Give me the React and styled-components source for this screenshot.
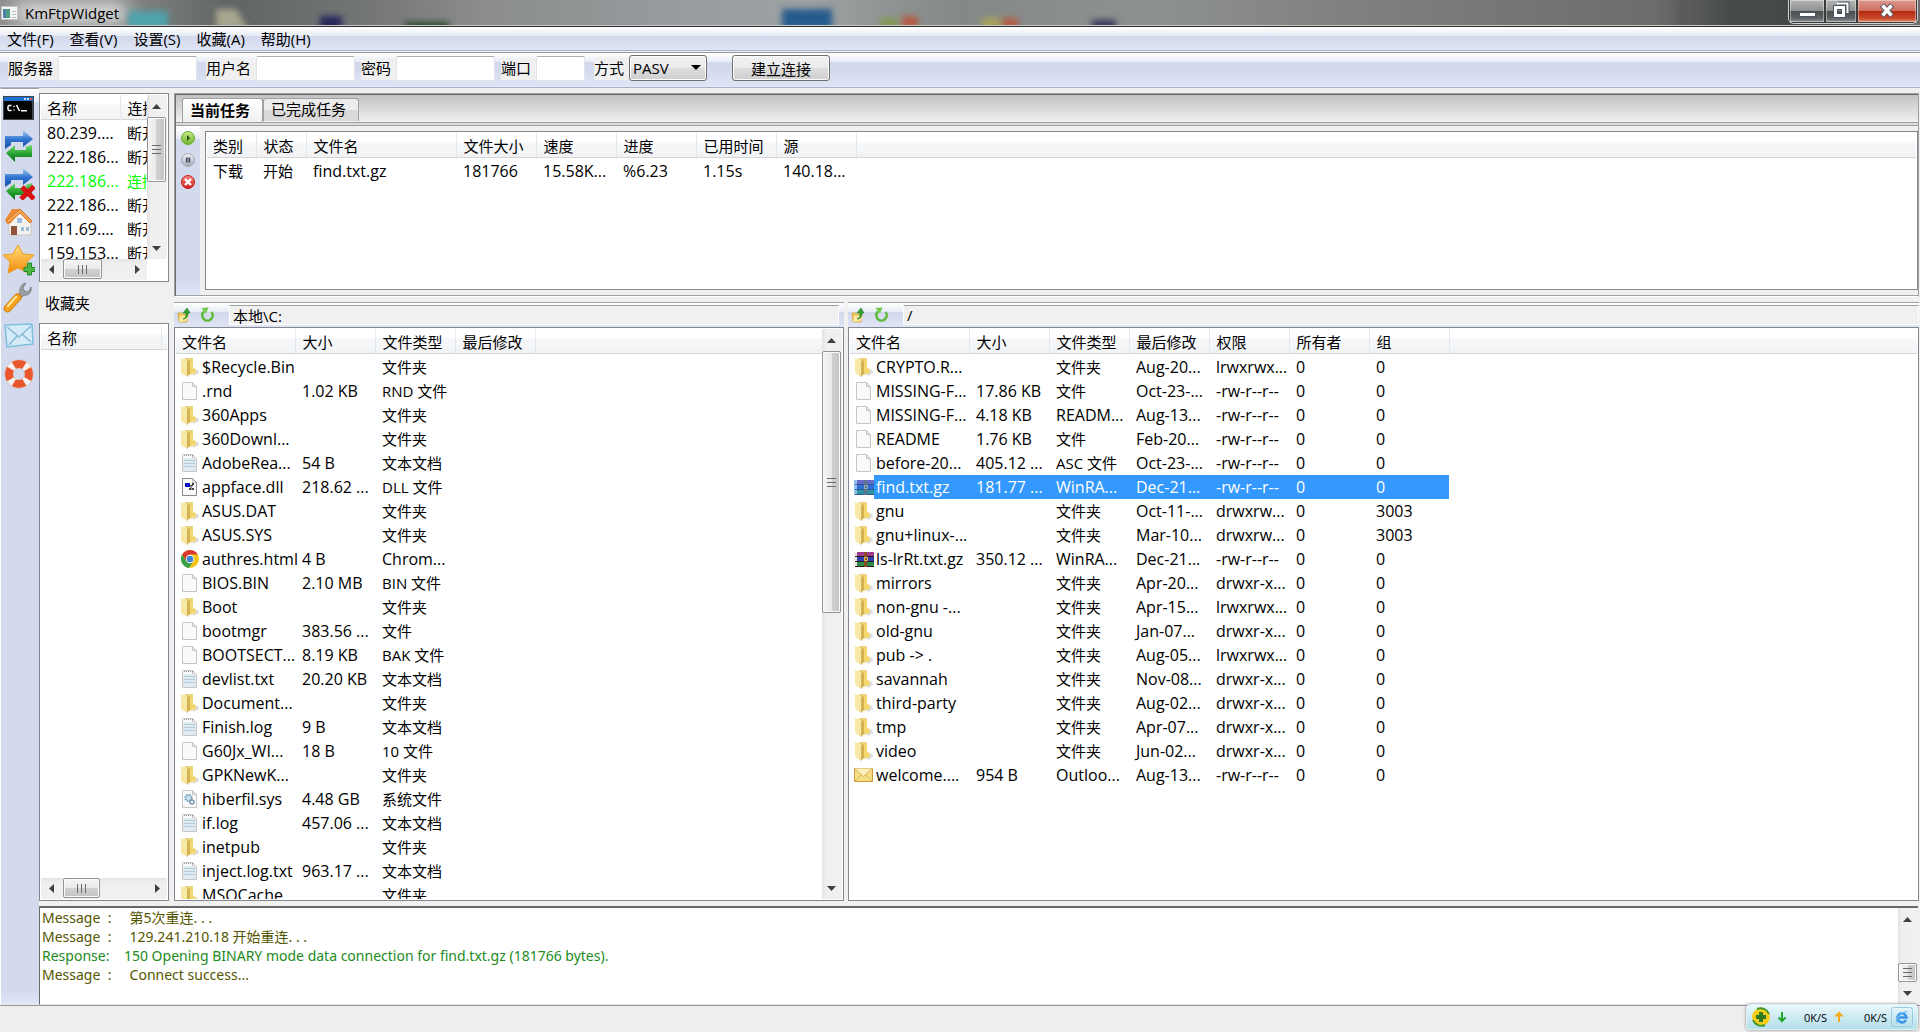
import styled, { createGlobalStyle } from "styled-components";

const GlobalStyles = createGlobalStyle`
  *, *::before, *::after {
    box-sizing: border-box;
  }
  body {
    --color-face: #f0f0f0;
    --color-frame: #828790;
    --bar: linear-gradient(#ffffff 0, #e6ebf5 9px, #d3d9ed 9px, #d4daee 50%, #e0e6f5 100%);
    margin: 0;
    background: var(--color-face);
    color: #000;
    font-family: "Open Sans", "Noto Sans CJK SC", sans-serif;
    font-size: 15px;
  }
  button, input, select {
    font: inherit;
    color: inherit;
  }
`;

const Window = styled.div`
  display: flex;
  flex-direction: column;
  height: 100vh;
  overflow: hidden;
`;

/* ---------- title bar ---------- */

const TitleBar = styled.header`
  position: relative;
  display: flex;
  align-items: center;
  flex: none;
  height: 27px;
  padding-left: 1px;
  background: #7d7f7e;
  border-bottom: 1px solid #2c2c2c;
  box-shadow: inset 0 -1px #c9c9c9;
  overflow: hidden;
`;

const Backdrop = styled.svg`
  position: absolute;
  inset: 0 0 1px;
  width: 100%;
  height: 25px;
`;

const Title = styled.h1`
  position: relative;
  flex: 1;
  margin: 0 0 0 7px;
  font-size: 15px;
  font-weight: 400;
  line-height: 26px;
`;

const AppIcon = styled.svg`
  position: relative;
`;

const WindowButtons = styled.div`
  position: relative;
  display: flex;
  align-self: flex-start;
  height: 24px;
  margin-right: 2px;
  border: 1px solid #d0d0d0;
  border-top: 0;
  border-radius: 0 0 6px 6px;
  overflow: hidden;
`;

const WindowButton = styled.button`
  display: grid;
  place-items: center;
  width: ${(props) => props.$width}px;
  padding: 0 0 2px;
  border: 1px solid #3a3a3a;
  border-top: 0;
  box-shadow: inset 0 0 0 1px #ffffff66;
  background: ${(props) =>
    props.$danger
      ? "linear-gradient(#dc9a8e 0, #cf6d5d 11px, #b52a10 11px, #c8462a 18px, #dd8a6a)"
      : "linear-gradient(#b4b6b5 0, #8d908f 11px, #4b4f50 11px, #5d6264 18px, #8c9092)"};
`;

/* ---------- menu and connection bar ---------- */

const MenuBar = styled.nav`
  display: flex;
  flex: none;
  height: 24px;
  margin-bottom: 1px;
  padding-left: 7px;
  gap: 16px;
  background: var(--bar);
  border-bottom: 1px solid #aab2cf;
`;

const MenuItem = styled.button`
  padding: 0;
  border: 0;
  background: none;
  line-height: 24px;
`;

const ConnectBar = styled.form`
  display: flex;
  flex: none;
  align-items: center;
  height: 36px;
  padding: 0 0 4px 8px;
  background: var(--bar);
  border-top: 1px solid #999;
  border-bottom: 1px solid #aab2cf;
`;

const Field = styled.div`
  display: flex;
  align-items: center;
  justify-content: space-between;
  width: ${(props) => props.$width}px;
  margin-right: ${(props) => props.$after}px;
`;

const Label = styled.label`
  flex: 1;
  height: 22px;
  margin-top: 2px;
  background: var(--color-face);
  line-height: 21px;
`;

const TextInput = styled.input`
  width: ${(props) => props.$width}px;
  height: 25px;
  padding: 0 4px;
  border: 1px solid #e2e3ea;
  border-top-color: #abadb3;
  border-radius: 2px;
  background: #fff;
`;

const SelectWrap = styled.div`
  position: relative;

  &::after {
    content: "";
    position: absolute;
    right: 6px;
    top: 10px;
    border: 5px solid transparent;
    border-top-color: #000;
    border-bottom: 0;
    pointer-events: none;
  }
`;

const Select = styled.select`
  appearance: none;
  display: block;
  width: 78px;
  height: 26px;
  padding: 0 3px;
  border: 1px solid #707070;
  border-radius: 3px;
  background: linear-gradient(#f2f2f2, #ebebeb 50%, #dddddd 50%, #cfcfcf);
  box-shadow: inset 0 0 0 1px #fff;
`;

const PushButton = styled.button`
  width: 98px;
  height: 26px;
  padding: 0;
  border: 1px solid #707070;
  border-radius: 3px;
  background: linear-gradient(#f2f2f2, #ebebeb 50%, #dddddd 50%, #cfcfcf);
  box-shadow: inset 0 0 0 1px #fcfcfc;
`;

/* ---------- body ---------- */

const Body = styled.div`
  display: flex;
  flex: 1;
  min-height: 0;
`;

const SideBar = styled.aside`
  display: flex;
  flex-direction: column;
  flex: none;
  width: 39px;
  gap: 6px;
  padding: 3px 0 0 2px;
  border-top: 1px solid #a0a0a0;
  border-left: 1px solid #fff;
  background: linear-gradient(#fff 0, #e9edf7 12px, #d4daee 14px, #d4daee calc(100% - 14px), #e2e8f6);
`;

const ToolButton = styled.button`
  display: grid;
  place-items: center;
  width: ${(props) => props.$size}px;
  height: ${(props) => props.$size}px;
  padding: 0;
  border: 0;
  background: none;
`;

const Content = styled.div`
  display: flex;
  flex-direction: column;
  flex: 1;
  min-width: 0;
`;

const Workspace = styled.div`
  display: grid;
  grid-template-columns: 130px 1fr;
  grid-template-rows: minmax(0, 1fr);
  flex: 1;
  gap: 5px;
  min-height: 0;
  padding: 5px 1px 5px 0;
`;

const Column = styled.div`
  display: flex;
  flex-direction: column;
  min-width: 0;
`;

const Frame = styled.div`
  display: grid;
  grid-template-columns: minmax(0, 1fr) auto;
  grid-template-rows: minmax(0, 1fr) auto;
  flex: ${(props) => (props.$height ? "none" : "1")};
  height: ${(props) => (props.$height ? `${props.$height}px` : "auto")};
  min-width: 0;
  min-height: 0;
  padding: 1px;
  border: 1px solid var(--color-frame);
  background: #fff;
`;

const Clip = styled.div`
  min-width: 0;
  overflow: hidden;
`;

const SectionTitle = styled.h2`
  margin: 0;
  padding: 1px 6px 0;
  font-size: 15px;
  font-weight: 400;
  line-height: 40px;
`;

const Table = styled.table`
  width: 100%;
  border-collapse: collapse;
  table-layout: fixed;
`;

const Th = styled.th`
  height: 26px;
  padding: 0 0 0 7px;
  border-right: 1px solid #e3e8ee;
  background: linear-gradient(
    #fff 0, #fff 9px, #f7f8fa 9px, #f1f2f4 24px, #d5d5d5 24px, #d5d5d5 25px, #fff 25px
  );
  font-weight: 400;
  line-height: 22px;
  text-align: left;
  white-space: nowrap;
  overflow: hidden;

  &:first-child {
    padding-left: 6px;
  }
  &:last-child {
    border-right: 0;
  }
`;

const Row = styled.tr`
  height: 24px;
  color: ${(props) => props.$color || "inherit"};
`;

const Td = styled.td`
  height: 24px;
  padding: ${(props) => (props.$latin ? 1 : 0)}px 0 0 7px;
  background: ${(props) => (props.$selected ? "#3399ff" : "none")};
  font-size: ${(props) => (props.$latin ? 16 : 15)}px;
  line-height: 23px;
  white-space: nowrap;
  overflow: hidden;

  &:first-child {
    padding-left: 6px;
  }
`;

const NameTd = styled(Td)`
  padding: 0;
  background: none;
  overflow: visible;

  &:first-child {
    padding-left: 4px;
  }
`;

const NameCell = styled.div`
  display: flex;
  align-items: center;
  height: 24px;
`;

const Name = styled.span`
  flex: 1;
  height: 24px;
  padding: 1px 0 0 2px;
  background: ${(props) => (props.$selected ? "#3399ff" : "none")};
`;

const FileSvg = styled.svg`
  flex: none;
`;

/* ---------- scroll bars ---------- */

const Track = styled.div`
  display: flex;
  flex-direction: ${(props) => (props.$vertical ? "column" : "row")};
  ${(props) =>
    props.$vertical ? "width: 20px; padding-right: 1px;" : "height: 21px; padding-bottom: 1px;"}
  background: ${(props) =>
    props.$vertical
      ? "linear-gradient(90deg, #e3e3e3, #efefef 4px, #f0f0f0)"
      : "linear-gradient(#e3e3e3, #efefef 4px, #f0f0f0)"};
`;

const ArrowButton = styled.button`
  display: grid;
  place-items: center;
  flex: none;
  width: ${(props) => (props.$vertical ? "100%" : "20px")};
  height: ${(props) => (props.$vertical ? "22px" : "100%")};
  padding: 0;
  border: 0;
  background: none;
`;

const Thumb = styled.div`
  display: grid;
  place-items: center;
  flex: none;
  ${(props) =>
    props.$vertical
      ? `height: ${props.$size}px; margin: ${props.$offset}px 0 auto;`
      : `width: ${props.$size}px; margin: 0 auto 0 ${props.$offset}px;`}
  border: 1px solid #959595;
  border-radius: 2px;
  box-shadow: inset 0 0 0 1px #fafafa;
  background: linear-gradient(
    ${(props) => (props.$vertical ? "90deg" : "180deg")},
    #f5f5f5, #e9e9eb 50%, #d2d2d4 50%, #c3c3c6
  );
`;

const arrows = {
  up: "M0 5 4.500 0 9 5z",
  down: "M0 0 9 0 4.500 5z",
  left: "M5 0 0 4.500 5 9z",
  right: "M0 0 5 4.500 0 9z",
};

function Arrow({ dir }) {
  const tall = dir === "left" || dir === "right";
  return (
    <svg width={tall ? 5 : 9} height={tall ? 9 : 5} fill="#404040">
      <path d={arrows[dir]} />
    </svg>
  );
}

function ScrollBar({ vertical, size, offset = 0 }) {
  return (
    <Track $vertical={vertical}>
      <ArrowButton $vertical={vertical} aria-label="scroll back">
        <Arrow dir={vertical ? "up" : "left"} />
      </ArrowButton>
      <Thumb $vertical={vertical} $size={size} $offset={offset}>
        <svg width="9" height="9" stroke="#6a6a6a">
          {vertical ? (
            <path d="M0 .5h9M0 4.500h9M0 8.500h9" />
          ) : (
            <path d="M.5 0v9M4.500 0v9M8.500 0v9" />
          )}
        </svg>
      </Thumb>
      <ArrowButton $vertical={vertical} aria-label="scroll forward">
        <Arrow dir={vertical ? "down" : "right"} />
      </ArrowButton>
    </Track>
  );
}

/* ---------- task panel ---------- */

const TaskPanel = styled.section`
  display: flex;
  flex-direction: column;
  flex: none;
  height: 204px;
  margin-bottom: 5px;
  border: 1px solid #a0a0a0;
  border-bottom-color: #fff;
  box-shadow: inset 1px 1px #696969, inset 0 -1px #a0a0a0;
  padding: 1px 0 1px 1px;
`;

const Tabs = styled.div`
  display: flex;
  align-items: flex-end;
  flex: none;
  height: 31px;
  padding: 0 0 3px 6px;
  border-bottom: 1px solid #a0a0a0;
  background: linear-gradient(#c2c2c2, #f0f0f0 27px, #a0a0a0 27px, #a0a0a0 28px, #dcdcdc 28px);
`;

const Tab = styled.button`
  width: ${(props) => (props.$active ? 81 : 96)}px;
  height: ${(props) => (props.$active ? 24 : 23)}px;
  margin-bottom: ${(props) => (props.$active ? 0 : 1)}px;
  padding: 0 0 2px 7px;
  border: 1px solid #a0a0a0;
  border-bottom: 0;
  border-radius: 3px 3px 0 0;
  background: ${(props) =>
    props.$active ? "linear-gradient(#fff, #f0f0f0)" : "linear-gradient(#ececec 50%, #dadada 50%)"};
  font-weight: ${(props) => (props.$active ? 700 : 400)};
  line-height: 20px;
  text-align: left;
  white-space: nowrap;
`;

const TaskBody = styled.div`
  display: flex;
  flex: 1;
  min-height: 0;
`;

const TaskTools = styled.div`
  display: flex;
  flex-direction: column;
  align-items: center;
  width: 24px;
  gap: 6px;
  padding-top: 4px;
  background: linear-gradient(#fff 0, #e9edf7 12px, #d4daee 14px, #d4daee calc(100% - 14px), #e0e6f5);
`;

const TaskList = styled.div`
  display: flex;
  flex: 1;
  min-width: 0;
  padding: 5px 0 5px 5px;
`;

/* ---------- file panes ---------- */

const Panes = styled.div`
  display: grid;
  grid-template-columns: 670px minmax(0, 1fr);
  grid-template-rows: minmax(0, 1fr);
  flex: 1;
  gap: 4px;
  min-height: 0;
`;

const PathBar = styled.div`
  display: flex;
  align-items: center;
  flex: none;
  height: 25px;
  padding: 0 ${(props) => (props.$inset ? 5 : 0)}px 0 3px;
  gap: 6px;
  border-top: 1px solid #a0a0a0;
  background: var(--bar);
`;

const PathInput = styled.input`
  flex: 1;
  min-width: 0;
  height: 20px;
  margin-left: 8px;
  padding: 0 3px;
  border: 1px solid #fff;
  border-top-color: #a0a0a0;
  background: var(--color-face);
`;

/* ---------- log and status ---------- */

const LogBox = styled.div`
  display: flex;
  flex: none;
  height: 99px;
  margin-right: 2px;
  border: 1px solid #696969;
  border-top: 2px solid #696969;
  border-right: 0;
  border-bottom-color: #e3e3e3;
  background: #fff;
`;

const LogLines = styled.div`
  flex: 1;
  padding: 0 2px;
`;

const LogLine = styled.p`
  margin: 0;
  color: ${(props) => (props.$ok ? "#228b22" : "#555500")};
  font-family: "Noto Sans", "Noto Sans CJK SC", sans-serif;
  font-size: 14px;
  line-height: 19px;
  white-space: pre;
`;

const StatusBar = styled.footer`
  position: relative;
  flex: none;
  height: 27px;
  border-top: 1px solid #999;
  background: #f0eded;
`;

const SpeedWidget = styled.div`
  position: absolute;
  right: 2px;
  bottom: 2px;
  display: flex;
  align-items: center;
  width: 172px;
  height: 26px;
  padding: 0 4px;
  border: 1px solid #d8f0f6;
  border-radius: 4px;
  background: linear-gradient(#eaf8fb, #cdeaf2 50%, #b4dfeb);
  box-shadow: 0 0 3px #777;
  font-size: 11px;
`;

const Speed = styled.span`
  width: ${(props) => props.$width}px;
  text-align: right;
`;

const IeBox = styled.span`
  display: grid;
  place-items: center;
  width: 22px;
  height: 20px;
  margin-left: auto;
  border: 1px solid #9ccbe0;
  border-radius: 3px;
`;

/* ---------- icons ---------- */

function DesktopBlur() {
  return (
    <Backdrop preserveAspectRatio="none" viewBox="0 0 1920 25" aria-hidden="true">
      <defs>
        <linearGradient id="desk">
          <stop offset="0" stopColor="#8b8e8d" />
          <stop offset=".06" stopColor="#858887" />
          <stop offset=".12" stopColor="#606463" />
          <stop offset=".2" stopColor="#767978" />
          <stop offset=".25" stopColor="#8b8d8c" />
          <stop offset=".34" stopColor="#959a9c" />
          <stop offset=".42" stopColor="#9da2a3" />
          <stop offset=".5" stopColor="#848887" />
          <stop offset=".6" stopColor="#8d918f" />
          <stop offset=".75" stopColor="#7a7a78" />
          <stop offset=".86" stopColor="#6e6d6c" />
          <stop offset=".9" stopColor="#474c4b" />
          <stop offset=".93" stopColor="#444846" />
          <stop offset="1" stopColor="#6d6e6d" />
        </linearGradient>
        <filter id="soft" x="-20%" y="-80%" width="140%" height="260%">
          <feGaussianBlur stdDeviation="3" />
        </filter>
        <filter id="glow" x="-20%" y="-100%" width="140%" height="300%">
          <feGaussianBlur stdDeviation="9" />
        </filter>
      </defs>
      <rect width="1920" height="25" fill="url(#desk)" />
      <rect x="15" y="3" width="112" height="20" fill="#e2e2e2" filter="url(#glow)" />
      <g filter="url(#soft)">
        <path fill="#50a2aa" d="M128 11h40v20h-40z" />
        <path fill="#a9a68f" d="M216 9h20l12 20h-32z" />
        <path fill="#25285c" d="M320 16h22v14h-22z" />
        <path fill="#2b4931" d="M405 22h44v10h-44z" />
        <path fill="#285c8d" d="M782 9h50v20h-50z" />
        <path fill="#839852" d="M880 18h18v14h-18z" />
        <path fill="#b45c45" d="M902 16h16v14h-16z" />
        <path fill="#a7a258" d="M982 18h18v12h-18z" />
        <path fill="#b45c45" d="M1002 18h16v12h-16z" />
        <path fill="#353758" d="M1092 20h24v10h-24z" />
        <path fill="#565958" d="M1679 0h8v25h-8z" />
      </g>
    </Backdrop>
  );
}

function CmdIcon() {
  return (
    <svg width="32" height="32" viewBox="0 0 32 32">
      <path fill="#3f4650" d="M0 4h31v24H0z" />
      <path fill="#1f6fd0" d="M1 5h29v4H1z" />
      <path fill="#cfe2fa" d="M21 6h2v2h-2zM24 6h2v2h-2z" />
      <path fill="#e0533a" d="M27 6h2v2h-2z" />
      <path fill="#050505" d="M1 9h28v18H1z" />
      <path fill="none" stroke="#fff" strokeWidth="1.500" d="M8.500 13.500H6l-1 1v3l1 1h2.500M11 14v1M11 17.500v1M13.500 13l3 6M18 18.800h6" />
    </svg>
  );
}

function SwapIcon({ failed }) {
  return (
    <svg width="32" height="32" viewBox="0 0 32 32">
      <defs>
        <linearGradient id="blueArrow" x2="0" y2="1">
          <stop stopColor="#a9cdf4" />
          <stop offset=".5" stopColor="#2f73cf" />
          <stop offset="1" stopColor="#1b50a4" />
        </linearGradient>
        <linearGradient id="greenArrow" x2="0" y2="1">
          <stop stopColor="#6bd865" />
          <stop offset=".6" stopColor="#1e9a2a" />
          <stop offset="1" stopColor="#0d6b1c" />
        </linearGradient>
      </defs>
      <path fill="url(#blueArrow)" d="M2 19V6h18V0l10 9-10 8v-5H8v3z" />
      <path fill="url(#greenArrow)" d="m3 23 9-8v5h11v-3l6-2v12H12v5z" />
      {failed && (
        <path stroke="#d81212" strokeWidth="5" d="m19 19 12 12M31 18.500 18 31" />
      )}
    </svg>
  );
}

function HomeIcon() {
  return (
    <svg width="32" height="32" viewBox="0 0 32 32">
      <path fill="#f4f1ee" stroke="#c9c4c0" d="M6 14 17 5l11 10v14H6z" />
      <path fill="#f08c34" d="m2 14 7-11h9L8 17l-4 1z" />
      <path fill="#f6a454" stroke="#d87423" d="m17 3 12 12-2 2L17 7 6 17l-3-2z" />
      <path fill="#91513a" d="M8 20h6v9H8z" />
      <path fill="#9bbfe0" d="M14 12h5v5h-5zM18 21h3v4h-3zM23 21h3v4h-3z" />
    </svg>
  );
}

function StarIcon() {
  return (
    <svg width="32" height="32" viewBox="0 0 32 32">
      <defs>
        <linearGradient id="gold" x2="0" y2="1">
          <stop stopColor="#ffe07a" />
          <stop offset="1" stopColor="#f38a0b" />
        </linearGradient>
      </defs>
      <path fill="url(#gold)" stroke="#ef9d1c" strokeLinejoin="round" d="m15 1 5 9 11 1-8 8 2 10-10-5-10 5 2-11-7-7 10-1z" />
      <path fill="#4cb84a" stroke="#278a2b" d="M24.500 19h4v4.500H32v4h-3.500V31h-4v-3.500H21v-4h3.500z" />
    </svg>
  );
}

function ToolIcon() {
  return (
    <svg width="32" height="32" viewBox="0 0 32 32">
      <path fill="#9a9ea1" stroke="#6f7376" strokeWidth=".7" d="M14 15c3-1 2-5 3-8 1-4 3-6 6-6l-3 5 2 4 4-1 2-4c1 4-1 7-4 8-3 0-5 1-7 4z" />
      <path fill="#f6a21a" stroke="#c97a0c" d="M13 12c3-1 6 2 5 5L7 29c-3 3-8-1-5-5z" />
      <path stroke="#ffe193" strokeWidth="2.500" strokeLinecap="round" d="m5 24 8-9" />
    </svg>
  );
}

function MailIcon() {
  return (
    <svg width="32" height="32" viewBox="0 0 32 32">
      <path fill="#d3ecf7" stroke="#7fbfdc" strokeWidth="1.500" strokeLinejoin="round" d="m2 5 27-1 1 20-26 3z" />
      <path fill="none" stroke="#86b9d4" strokeWidth="1.500" d="m4 7 12 10L28 6M6 25l8-9M28 22l-9-8" />
      <path stroke="#d2d2dc" d="M14 29l14-2" />
    </svg>
  );
}

function RingIcon() {
  return (
    <svg width="32" height="32" viewBox="0 0 32 32" fill="none">
      <circle cx="16" cy="16" r="10" stroke="#c9b8b2" strokeWidth="9" />
      <circle cx="16" cy="16" r="10" stroke="#f4f1ef" strokeWidth="8" />
      <circle cx="16" cy="16" r="10" stroke="#e9582d" strokeWidth="8" strokeDasharray="11 4.708" strokeDashoffset="-10" />
    </svg>
  );
}

function OrbIcon({ kind }) {
  const colors = {
    play: ["#c8ec8a", "#6cb02e"],
    pause: ["#f4f5f8", "#a3a8b4"],
    stop: ["#f28a80", "#c81e1e"],
  };
  return (
    <svg width="16" height="16" viewBox="0 0 16 16">
      <defs>
        <linearGradient id={`orb-${kind}`} x2="0" y2="1">
          <stop stopColor={colors[kind][0]} />
          <stop offset="1" stopColor={colors[kind][1]} />
        </linearGradient>
      </defs>
      <circle cx="8" cy="8" r="6.500" fill={`url(#orb-${kind})`} stroke={colors[kind][1]} />
      {kind === "play" && <path fill="#2a4d12" d="m7 5 3 3-3 3z" />}
      {kind === "pause" && <path fill="#444b5c" d="M6 5.500h1.700v5H6zM8.500 5.500h1.700v5H8.500z" />}
      {kind === "stop" && <path stroke="#fff" strokeWidth="2.400" d="m5 5 6 6M11 5l-6 6" />}
    </svg>
  );
}

function UpFolderIcon() {
  return (
    <svg width="16" height="16" viewBox="0 0 16 16">
      <path fill="#efcb5b" stroke="#c99b2e" strokeWidth=".7" d="M1 6h4l1 1h5l-1 8H2z" />
      <path fill="#fbe8a0" d="m3 9 9-1-2 6-8 1z" />
      <path fill="#34a32f" stroke="#1e7a20" strokeWidth=".6" d="M6 12c3-1 3-3 3-6H6l4-5 3 5h-2c0 4-2 6-5 6z" />
    </svg>
  );
}

function RefreshIcon() {
  return (
    <svg width="16" height="16" viewBox="0 0 16 16">
      <path fill="none" stroke="#5cbb36" strokeWidth="2.600" d="M12.500 5A5.200 5.200 0 1 1 5 4.500" />
      <path fill="#6fca46" d="m2.500 1 7-.500-2.500 6z" />
    </svg>
  );
}

function Page({ children }) {
  return (
    <>
      <path fill="#fafafa" stroke="#c6c6c6" d="M2.500 1.500h10l4 4v13h-14z" />
      <path fill="#e4e4e4" stroke="#c6c6c6" d="M12.500 1.500v4h4z" />
      {children}
    </>
  );
}

const fileIcons = {
  folder: (
    <>
      <path fill="#dedede" d="m12 17 6-5 1 4-5 3z" />
      <path fill="#ecd27b" d="M5 1h8v16H5z" />
      <path fill="#f7e8a5" d="m1 1 6 2v17l-6-4z" />
      <path fill="#d3b250" d="m7 4 3-1v14l-3 3z" />
      <path fill="#f2d873" d="m10 5 3-3v9l3 1v4l-6 2z" />
    </>
  ),
  file: <Page />,
  text: (
    <Page>
      <path fill="#dfebf2" d="M3 5h13v13H3z" />
      <path stroke="#b4c9d6" d="M4 7.500h11M4 10.500h11M4 13.500h11" />
      <path stroke="#999" strokeDasharray="1 1" d="M4 2.500h9" />
    </Page>
  ),
  dll: (
    <Page>
      <path fill="none" stroke="#8a8a8a" d="M2.500 1.500h10l4 4v13h-14z" />
      <path fill="#0a18c4" d="M5 6h5v4H5z" />
      <path stroke="#333" d="M10 8.500h3M11 8v5" />
      <path fill="#444" d="M12 6h2v2h-2zM12 11h2v2h-2zM9 11h2v2H9z" />
    </Page>
  ),
  sys: (
    <Page>
      <circle cx="8.500" cy="9" r="3.200" fill="#cfe2ef" stroke="#6c9dbd" strokeWidth="2" strokeDasharray="1.500 1" />
      <circle cx="12" cy="13" r="2" fill="none" stroke="#7d96a8" strokeWidth="1.500" />
    </Page>
  ),
  chrome: (
    <>
      <circle cx="10" cy="10" r="9" fill="#f2c619" />
      <path fill="#da3a2c" d="M2.200 5.500A9 9 0 0 1 17.800 5.500H10L6 12z" />
      <path fill="#3ba04a" d="M2.200 5.500A9 9 0 0 0 9 19l4.500-7H6z" />
      <circle cx="10" cy="10" r="4.200" fill="#fff" />
      <circle cx="10" cy="10" r="3.300" fill="#3f83d6" />
    </>
  ),
  mail: (
    <>
      <path fill="#f7dd86" stroke="#c99c3c" d="M.5 3.500h18v13H.5z" />
      <path fill="#fdf0bd" stroke="#d9b458" d="m.5 3.500 9 8 9-8" />
      <path stroke="#d9b458" d="m.5 16.500 7-7M18.500 16.500l-7-7" />
    </>
  ),
  rar: (
    <>
      <path fill="#9b3a8e" d="M3 3h17v4H3z" />
      <path fill="#2f3fae" d="M3 8h17v4H3z" />
      <path fill="#2a8b45" d="M3 13h17v4H3z" />
      <path fill="#e9e4da" d="m0 3 3 1v3L0 6zM0 8l3 1v3l-3-1zM0 13l3 1v3l-3-1z" />
      <path stroke="#2b1a1a" d="M1 7.500h19M1 12.500h19M1 17.500h19" />
      <path fill="#8a4c26" d="M10 3h3v15h-3z" />
      <path fill="none" stroke="#e6c04f" d="M10.500 8.500h3v3h-3z" />
    </>
  ),
};

// selected archives are tinted with the highlight colour
fileIcons.rarSelected = (
  <>
    {fileIcons.rar}
    <path fill="#3399ff" opacity=".5" d="M0 3h20v15H0z" />
  </>
);

function FileIcon({ type }) {
  return (
    <FileSvg width="20" height="20" viewBox="0 0 20 20">
      {fileIcons[type]}
    </FileSvg>
  );
}

/* ---------- data ---------- */

const menus = ["文件(F)", "查看(V)", "设置(S)", "收藏(A)", "帮助(H)"];

const servers = [
  ["80.239....", "断开"],
  ["222.186...", "断开"],
  ["222.186...", "连接"],
  ["222.186...", "断开"],
  ["211.69....", "断开"],
  ["159.153...", "断开"],
];

const taskHeads = [
  ["类别", 49],
  ["状态", 50],
  ["文件名", 150],
  ["文件大小", 80],
  ["速度", 80],
  ["进度", 80],
  ["已用时间", 80],
  ["源", 80],
];
const tasks = [["下载", "开始", "find.txt.gz", "181766", "15.58K...", "%6.23", "1.15s", "140.18..."]];

const localHeads = [
  ["文件名", 119],
  ["大小", 80],
  ["文件类型", 80],
  ["最后修改", 80],
];
const localFiles = [
  ["folder", "$Recycle.Bin", "", "文件夹", ""],
  ["file", ".rnd", "1.02 KB", "RND 文件", ""],
  ["folder", "360Apps", "", "文件夹", ""],
  ["folder", "360Downl...", "", "文件夹", ""],
  ["text", "AdobeRea...", "54 B", "文本文档", ""],
  ["dll", "appface.dll", "218.62 ...", "DLL 文件", ""],
  ["folder", "ASUS.DAT", "", "文件夹", ""],
  ["folder", "ASUS.SYS", "", "文件夹", ""],
  ["chrome", "authres.html", "4 B", "Chrom...", ""],
  ["file", "BIOS.BIN", "2.10 MB", "BIN 文件", ""],
  ["folder", "Boot", "", "文件夹", ""],
  ["file", "bootmgr", "383.56 ...", "文件", ""],
  ["file", "BOOTSECT...", "8.19 KB", "BAK 文件", ""],
  ["text", "devlist.txt", "20.20 KB", "文本文档", ""],
  ["folder", "Document...", "", "文件夹", ""],
  ["text", "Finish.log", "9 B", "文本文档", ""],
  ["file", "G60Jx_WI...", "18 B", "10 文件", ""],
  ["folder", "GPKNewK...", "", "文件夹", ""],
  ["sys", "hiberfil.sys", "4.48 GB", "系统文件", ""],
  ["text", "if.log", "457.06 ...", "文本文档", ""],
  ["folder", "inetpub", "", "文件夹", ""],
  ["text", "inject.log.txt", "963.17 ...", "文本文档", ""],
  ["folder", "MSOCache", "", "文件夹", ""],
];

const remoteHeads = [
  ["文件名", 119],
  ["大小", 80],
  ["文件类型", 80],
  ["最后修改", 80],
  ["权限", 80],
  ["所有者", 80],
  ["组", 80],
];
const remoteFiles = [
  ["folder", "CRYPTO.R...", "", "文件夹", "Aug-20...", "lrwxrwx...", "0", "0"],
  ["file", "MISSING-F...", "17.86 KB", "文件", "Oct-23-...", "-rw-r--r--", "0", "0"],
  ["file", "MISSING-F...", "4.18 KB", "READM...", "Aug-13...", "-rw-r--r--", "0", "0"],
  ["file", "README", "1.76 KB", "文件", "Feb-20...", "-rw-r--r--", "0", "0"],
  ["file", "before-20...", "405.12 ...", "ASC 文件", "Oct-23-...", "-rw-r--r--", "0", "0"],
  ["rarSelected", "find.txt.gz", "181.77 ...", "WinRA...", "Dec-21...", "-rw-r--r--", "0", "0"],
  ["folder", "gnu", "", "文件夹", "Oct-11-...", "drwxrw...", "0", "3003"],
  ["folder", "gnu+linux-...", "", "文件夹", "Mar-10...", "drwxrw...", "0", "3003"],
  ["rar", "ls-lrRt.txt.gz", "350.12 ...", "WinRA...", "Dec-21...", "-rw-r--r--", "0", "0"],
  ["folder", "mirrors", "", "文件夹", "Apr-20...", "drwxr-x...", "0", "0"],
  ["folder", "non-gnu -...", "", "文件夹", "Apr-15...", "lrwxrwx...", "0", "0"],
  ["folder", "old-gnu", "", "文件夹", "Jan-07...", "drwxr-x...", "0", "0"],
  ["folder", "pub -> .", "", "文件夹", "Aug-05...", "lrwxrwx...", "0", "0"],
  ["folder", "savannah", "", "文件夹", "Nov-08...", "drwxr-x...", "0", "0"],
  ["folder", "third-party", "", "文件夹", "Aug-02...", "drwxr-x...", "0", "0"],
  ["folder", "tmp", "", "文件夹", "Apr-07...", "drwxr-x...", "0", "0"],
  ["folder", "video", "", "文件夹", "Jun-02...", "drwxr-x...", "0", "0"],
  ["mail", "welcome....", "954 B", "Outloo...", "Aug-13...", "-rw-r--r--", "0", "0"],
];

const log = [
  ["Message  :     第5次重连. . ."],
  ["Message  :     129.241.210.18 开始重连. . ."],
  ["Response:    150 Opening BINARY mode data connection for find.txt.gz (181766 bytes).", true],
  ["Message  :     Connect success..."],
];

const isLatin = (text) => !/[\u4e00-\u9fff]/.test(text);

/* ---------- composed parts ---------- */

function TableHead({ heads, last }) {
  return (
    <>
      <colgroup>
        {heads.map(([name, width]) => (
          <col key={name} width={width} />
        ))}
        <col />
      </colgroup>
      <thead>
        <tr>
          {heads.map(([name]) => (
            <Th key={name}>{name}</Th>
          ))}
          {last ? <Th>{last}</Th> : <Th as="td" />}
        </tr>
      </thead>
    </>
  );
}

function FileTable({ heads, files }) {
  return (
    <Table>
      <TableHead heads={heads} />
      <tbody>
        {files.map(([icon, name, ...cells], i) => {
          const selected = icon === "rarSelected";
          return (
            <Row key={i} $color={selected && "#fff"}>
              <NameTd $latin>
                <NameCell>
                  <FileIcon type={icon} />
                  <Name $selected={selected}>{name}</Name>
                </NameCell>
              </NameTd>
              {cells.map((cell, j) => (
                <Td key={j} $selected={selected} $latin={isLatin(cell)}>
                  {cell}
                </Td>
              ))}
              <td />
            </Row>
          );
        })}
      </tbody>
    </Table>
  );
}

function FilePane({ path, label, heads, files, scroll }) {
  return (
    <Column>
      <PathBar $inset={scroll}>
        <ToolButton $size={16} aria-label="up">
          <UpFolderIcon />
        </ToolButton>
        <ToolButton $size={16} aria-label="refresh">
          <RefreshIcon />
        </ToolButton>
        <PathInput aria-label={label} defaultValue={path} />
      </PathBar>
      <Frame>
        <Clip>
          <FileTable heads={heads} files={files} />
        </Clip>
        {scroll && <ScrollBar vertical size={262} />}
      </Frame>
    </Column>
  );
}

function Connection() {
  return (
    <ConnectBar onSubmit={(e) => e.preventDefault()}>
      <Field $width={189} $after={9}>
        <Label htmlFor="server">服务器</Label>
        <TextInput id="server" $width={139} />
      </Field>
      <Field $width={149} $after={6}>
        <Label htmlFor="user">用户名</Label>
        <TextInput id="user" $width={99} />
      </Field>
      <Field $width={134} $after={6}>
        <Label htmlFor="password">密码</Label>
        <TextInput id="password" type="password" $width={99} />
      </Field>
      <Field $width={84} $after={9}>
        <Label htmlFor="port">端口</Label>
        <TextInput id="port" $width={49} />
      </Field>
      <Field $width={113} $after={25}>
        <Label htmlFor="mode">方式</Label>
        <SelectWrap>
          <Select id="mode">
            <option>PASV</option>
            <option>PORT</option>
          </Select>
        </SelectWrap>
      </Field>
      <PushButton>建立连接</PushButton>
    </ConnectBar>
  );
}

function Sites() {
  return (
    <Column>
      <Frame $height={189}>
        <Clip>
          <Table>
            <TableHead heads={[["名称", 79]]} last="连接" />
            <tbody>
              {servers.map(([name, state], i) => (
                <Row key={i} $color={state === "连接" && "#00ff00"}>
                  <Td $latin>{name}</Td>
                  <Td>{state}</Td>
                </Row>
              ))}
            </tbody>
          </Table>
        </Clip>
        <ScrollBar vertical size={65} />
        <ScrollBar size={39} offset={2} />
      </Frame>
      <SectionTitle>收藏夹</SectionTitle>
      <Frame>
        <Clip>
          <Table>
            <TableHead heads={[["名称", 120]]} />
          </Table>
        </Clip>
        <span />
        <ScrollBar size={37} offset={2} />
      </Frame>
    </Column>
  );
}

function Tasks() {
  return (
    <TaskPanel>
      <Tabs>
        <Tab $active>当前任务</Tab>
        <Tab>已完成任务</Tab>
      </Tabs>
      <TaskBody>
        <TaskTools>
          <ToolButton $size={16} aria-label="start"><OrbIcon kind="play" /></ToolButton>
          <ToolButton $size={16} aria-label="pause"><OrbIcon kind="pause" /></ToolButton>
          <ToolButton $size={16} aria-label="cancel"><OrbIcon kind="stop" /></ToolButton>
        </TaskTools>
        <TaskList>
          <Frame>
            <Clip>
              <Table>
                <TableHead heads={taskHeads} />
                <tbody>
                  {tasks.map((cells, i) => (
                    <Row key={i}>
                      {cells.map((cell, j) => (
                        <Td key={j} $latin={isLatin(cell)}>{cell}</Td>
                      ))}
                      <td />
                    </Row>
                  ))}
                </tbody>
              </Table>
            </Clip>
          </Frame>
        </TaskList>
      </TaskBody>
    </TaskPanel>
  );
}

export default function App() {
  return (
    <Window>
      <GlobalStyles />
      <TitleBar>
        <DesktopBlur />
        <AppIcon width="17" height="16" viewBox="0 0 17 16">
          <path fill="#f6f6f6" stroke="#c4c4c4" d="M.5 1.500h16v13H.5z" />
          <path fill="#4e9c86" d="M2 4h7v9H2z" />
          <path fill="#4b7fa8" d="M2 4h3v9H2z" />
          <path stroke="#bbb" d="M11 6.500h4M11 9.500h4M11 12.500h4" />
        </AppIcon>
        <Title>KmFtpWidget</Title>
        <WindowButtons>
          <WindowButton $width={36} aria-label="minimize">
            <svg width="18" height="18">
              <path fill="#fff" stroke="#4c5160" d="M1.500 11.500h16v4h-16z" />
            </svg>
          </WindowButton>
          <WindowButton $width={32} aria-label="restore">
            <svg width="18" height="18" fill="none">
              <path stroke="#4c5160" strokeWidth="4" d="M6 2.500h9.500v9" />
              <path stroke="#fff" strokeWidth="2" d="M5 2.500h10.500v9.500" />
              <path stroke="#4c5160" strokeWidth="5" d="M3.500 6.500h8v8h-8z" />
              <path stroke="#fff" strokeWidth="3" d="M3.500 6.500h8v8h-8z" />
            </svg>
          </WindowButton>
          <WindowButton $width={60} $danger aria-label="close">
            <svg width="18" height="18" fill="none">
              <path stroke="#4c4c5c" strokeWidth="5.500" d="m4 4 10 11M14 4 4 15" />
              <path stroke="#fff" strokeWidth="3.500" d="m4.500 4.500 9 10M13.500 4.500l-9 10" />
            </svg>
          </WindowButton>
        </WindowButtons>
      </TitleBar>

      <MenuBar>
        {menus.map((menu) => (
          <MenuItem key={menu}>{menu}</MenuItem>
        ))}
      </MenuBar>
      <Connection />

      <Body>
        <SideBar>
          <ToolButton $size={32} aria-label="console"><CmdIcon /></ToolButton>
          <ToolButton $size={32} aria-label="connect"><SwapIcon /></ToolButton>
          <ToolButton $size={32} aria-label="disconnect"><SwapIcon failed /></ToolButton>
          <ToolButton $size={32} aria-label="home"><HomeIcon /></ToolButton>
          <ToolButton $size={32} aria-label="add favourite"><StarIcon /></ToolButton>
          <ToolButton $size={32} aria-label="settings"><ToolIcon /></ToolButton>
          <ToolButton $size={32} aria-label="mail"><MailIcon /></ToolButton>
          <ToolButton $size={32} aria-label="help"><RingIcon /></ToolButton>
        </SideBar>
        <Content>
          <Workspace>
            <Sites />
            <Column>
              <Tasks />
              <Panes>
                <FilePane label="local path" path="本地\C:" heads={localHeads} files={localFiles} scroll />
                <FilePane label="remote path" path="/" heads={remoteHeads} files={remoteFiles} />
              </Panes>
            </Column>
          </Workspace>
          <LogBox>
            <LogLines>
              {log.map(([text, ok]) => (
                <LogLine key={text} $ok={ok}>{text}</LogLine>
              ))}
            </LogLines>
            <ScrollBar vertical size={19} offset={33} />
          </LogBox>
        </Content>
      </Body>

      <StatusBar>
        <SpeedWidget>
          <svg width="20" height="20" viewBox="0 0 20 20">
            <circle cx="10" cy="10" r="9" fill="#f7cd1c" />
            <path fill="none" stroke="#3f9a2b" strokeWidth="2" d="M6 2a9 9 0 0 1 12 5M14 18A9 9 0 0 1 2 13" />
            <path fill="#2d7a22" d="M8 5h4v3h3v4h-3v3H8v-3H5V8h3z" />
          </svg>
          <svg width="20" height="12" viewBox="0 0 20 12">
            <path fill="none" stroke="#20a92b" strokeWidth="2" d="M11 1v9M7.500 6.500 11 10l3.500-3.500" />
          </svg>
          <Speed $width={36}>0K/S</Speed>
          <svg width="22" height="12" viewBox="0 0 22 12">
            <path fill="none" stroke="#f5a81c" strokeWidth="2" d="M12 11V2M8.500 5.500 12 2l3.500 3.500" />
          </svg>
          <Speed $width={38}>0K/S</Speed>
          <IeBox>
            <svg width="14" height="14" viewBox="0 0 14 14" fill="none">
              <path stroke="#3a96e8" strokeWidth="2.600" d="M3 7.500h8.500A4.500 4.500 0 1 0 11 10" />
              <path stroke="#7cc0f5" strokeWidth="1.200" d="M2 13C-1 10 8 0 13 2" />
            </svg>
          </IeBox>
        </SpeedWidget>
      </StatusBar>
    </Window>
  );
}
